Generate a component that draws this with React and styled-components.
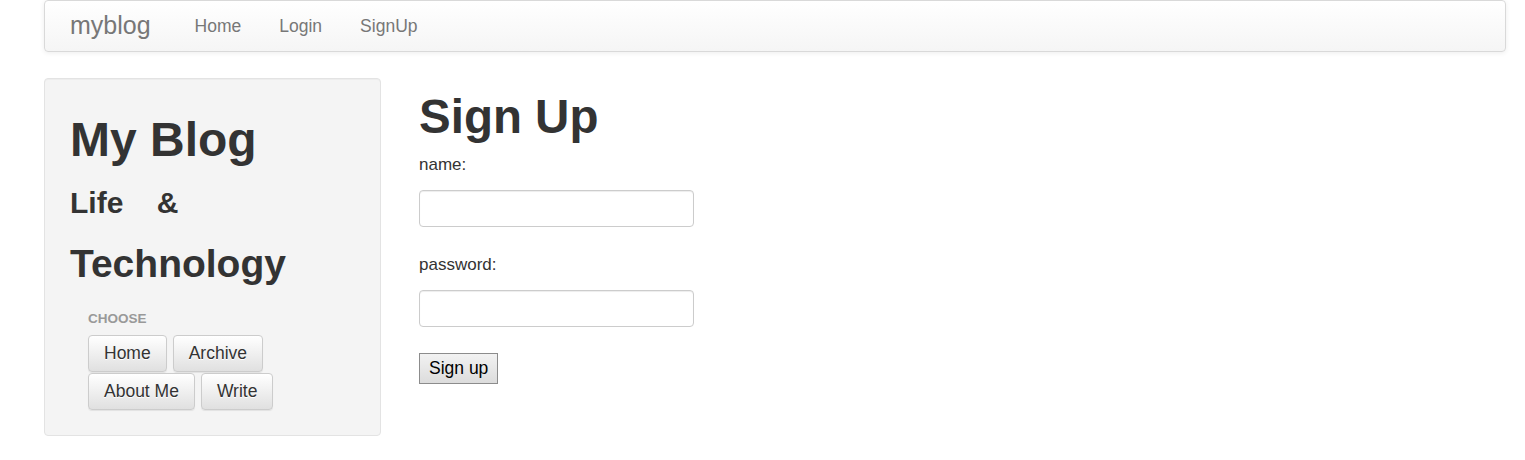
import React from 'react';
import styled, { createGlobalStyle } from 'styled-components';

const GlobalStyle = createGlobalStyle`
  html, body {
    margin: 0;
    padding: 0;
    background: #fff;
  }
  body {
    font-family: "Liberation Sans", Arial, sans-serif;
    font-size: 17px;
    line-height: 1.42857;
    color: #333;
  }
  * { box-sizing: border-box; }
`;

const Navbar = styled.nav`
  display: flex;
  align-items: center;
  height: 52px;
  margin: 0 19px 0 44px;
  border: 1px solid #d9d9d9;
  border-radius: 4px;
  background: linear-gradient(to bottom, #ffffff 0%, #f5f5f5 100%);
  box-shadow: inset 0 1px 0 rgba(255,255,255,.15), 0 1px 5px rgba(0,0,0,.075);
`;

const Brand = styled.a`
  padding: 0 25px;
  font-size: 25px;
  color: #777;
  text-decoration: none;
  text-shadow: 0 1px 0 rgba(255,255,255,.25);
`;

const NavLink = styled.a`
  padding: 0 19px;
  font-size: 17.5px;
  color: #777;
  text-decoration: none;
  text-shadow: 0 1px 0 rgba(255,255,255,.25);
`;

const Page = styled.div`
  display: flex;
  align-items: flex-start;
  gap: 38px;
  margin: 26px 0 0 44px;
`;

const Well = styled.aside`
  width: 337px;
  padding: 19px 25px 25px;
  background: #f4f4f4;
  border: 1px solid #e3e3e3;
  border-radius: 4px;
  box-shadow: inset 0 1px 1px rgba(0,0,0,.03);
`;

const Heading = styled.h1`
  margin: ${p => p.$mt}px 0 0;
  font-size: ${p => p.$size}px;
  font-weight: 700;
  line-height: 1.1;
  color: #333;
  white-space: pre;
`;

const Choose = styled.div`
  margin: 23px 0 0 18px;
  font-size: 13.5px;
  font-weight: 700;
  color: #999;
  text-transform: uppercase;
`;

const ButtonGroup = styled.div`
  display: flex;
  flex-wrap: wrap;
  gap: 1px 6px;
  width: 267px;
  margin: 7px 0 0 18px;
`;

const BtnDefault = styled.a`
  display: inline-block;
  padding: 7px 15px;
  font-size: 17.5px;
  line-height: 21px;
  color: #333;
  text-decoration: none;
  text-shadow: 0 1px 0 #fff;
  background: linear-gradient(to bottom, #ffffff 0%, #e0e0e0 100%);
  border: 1px solid #ccc;
  border-radius: 4px;
  box-shadow: inset 0 1px 0 rgba(255,255,255,.15), 0 1px 1px rgba(0,0,0,.075);
`;

const Main = styled.main`
  display: flex;
  flex-direction: column;
  align-items: flex-start;
  padding-top: 13px;
`;

const Label = styled.label`
  display: block;
  margin-top: ${p => p.$mt}px;
  font-size: 17px;
  line-height: 24px;
  color: #333;
`;

const Input = styled.input`
  display: block;
  width: 275px;
  height: 37px;
  margin-top: 13px;
  padding: 6px 12px;
  font-size: 17px;
  font-family: inherit;
  border: 1px solid #ccc;
  border-radius: 4px;
  background: #fff;
  box-shadow: inset 0 1px 1px rgba(0,0,0,.075);
  outline: none;
`;

const SubmitButton = styled.button`
  margin-top: 26px;
  padding: 3px 9px;
  font-family: "Liberation Sans", Arial, sans-serif;
  font-size: 17.5px;
  line-height: 23px;
  color: #000;
  background: linear-gradient(to bottom, #f2f2f2 0%, #dcdcdc 100%);
  border: 1px solid #8c8c8c;
  border-radius: 0;
`;

export default function App() {
  return (
    <>
      <GlobalStyle />
      <Navbar>
        <Brand href="#">myblog</Brand>
        <NavLink href="#">Home</NavLink>
        <NavLink href="#">Login</NavLink>
        <NavLink href="#">SignUp</NavLink>
      </Navbar>
      <Page>
        <Well>
          <Heading $size={48} $mt={16}>My Blog</Heading>
          <Heading as="h3" $size={30} $mt={19}>{'Life    &'}</Heading>
          <Heading as="h2" $size={39} $mt={24}>Technology</Heading>
          <Choose>Choose</Choose>
          <ButtonGroup>
            <BtnDefault href="#">Home</BtnDefault>
            <BtnDefault href="#">Archive</BtnDefault>
            <BtnDefault href="#">About Me</BtnDefault>
            <BtnDefault href="#">Write</BtnDefault>
          </ButtonGroup>
        </Well>
        <Main>
          <Heading $size={47.5} $mt={0}>Sign Up</Heading>
          <Label $mt={10} htmlFor="name">name:</Label>
          <Input id="name" type="text" />
          <Label $mt={26} htmlFor="password">password:</Label>
          <Input id="password" type="password" />
          <SubmitButton type="button">Sign up</SubmitButton>
        </Main>
      </Page>
    </>
  );
}
